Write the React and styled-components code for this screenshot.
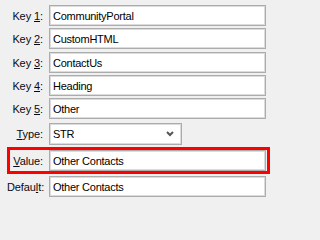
import styled, { createGlobalStyle } from "styled-components";

const GlobalStyle = createGlobalStyle`
  html, body {
    margin: 0;
    padding: 0;
    background: #f0f0f0;
  }
  body {
    font-family: "Liberation Sans", Arial, sans-serif;
    font-size: 11px;
    color: #000;
  }
`;

const Styled = {};

Styled.Form = styled.div`
  width: 271px;
  height: 202px;
  box-sizing: border-box;
  padding: 5px 1px 0 7px;
  display: flex;
  flex-direction: column;
`;

Styled.Row = styled.div`
  display: grid;
  grid-template-columns: 36px 1fr;
  column-gap: 6px;
  align-items: center;
  height: ${(props) => props.$height ?? 21}px;
  margin: 0 4px ${(props) => props.$gap ?? 2}px 0;
`;

Styled.Highlight = styled.div`
  border: 3px solid #ff0000;
  margin-bottom: 2px;
  padding: 0 1px 0 0;
`;

Styled.HighlightRow = styled(Styled.Row)`
  grid-template-columns: 33px 1fr;
  margin: 0;
`;

Styled.Label = styled.label`
  text-align: right;
  white-space: nowrap;
  letter-spacing: -0.1px;
  color: #0a0a14;
`;

Styled.Key = styled.span`
  text-decoration: underline;
  text-underline-offset: 1px;
`;

Styled.Input = styled.div`
  height: 21px;
  box-sizing: border-box;
  background: #fff;
  border: 1px solid #acacac;
  box-shadow: inset 0 0 0 1px #dcdcdc;
  padding: 0 3px;
  display: flex;
  align-items: center;
  letter-spacing: -0.25px;
  white-space: nowrap;
  overflow: hidden;
`;

Styled.Select = styled(Styled.Input)`
  width: 133px;
  height: 22px;
  justify-content: space-between;
  padding-right: 7px;
`;

Styled.Chevron = styled.svg`
  width: 8px;
  height: 6px;
  display: block;
`;

const Label = ({ text, mark }) => {
  const i = text.indexOf(mark);
  return (
    <Styled.Label>
      {text.slice(0, i)}
      <Styled.Key>{mark}</Styled.Key>
      {text.slice(i + 1)}:
    </Styled.Label>
  );
};

const keys = [
  ["Key 1", "1", "CommunityPortal", 2],
  ["Key 2", "2", "CustomHTML", 3],
  ["Key 3", "3", "ContactUs", 2],
  ["Key 4", "4", "Heading", 2],
  ["Key 5", "5", "Other", 4],
];

const App = () => {
  return (
    <>
      <GlobalStyle />
      <Styled.Form>
        {keys.map(([label, mark, value, gap]) => (
          <Styled.Row key={label} $gap={gap}>
            <Label text={label} mark={mark} />
            <Styled.Input>{value}</Styled.Input>
          </Styled.Row>
        ))}
        <Styled.Row $height={22}>
          <Label text="Type" mark="T" />
          <Styled.Select>
            STR
            <Styled.Chevron viewBox="0 0 8 6">
              <path d="M1 1 L4 4 L7 1" fill="none" stroke="#555" strokeWidth="2" />
            </Styled.Chevron>
          </Styled.Select>
        </Styled.Row>
        <Styled.Highlight>
          <Styled.HighlightRow>
            <Label text="Value" mark="V" />
            <Styled.Input>Other Contacts</Styled.Input>
          </Styled.HighlightRow>
        </Styled.Highlight>
        <Styled.Row>
          <Label text="Default" mark="l" />
          <Styled.Input>Other Contacts</Styled.Input>
        </Styled.Row>
      </Styled.Form>
    </>
  );
};

export default App;
